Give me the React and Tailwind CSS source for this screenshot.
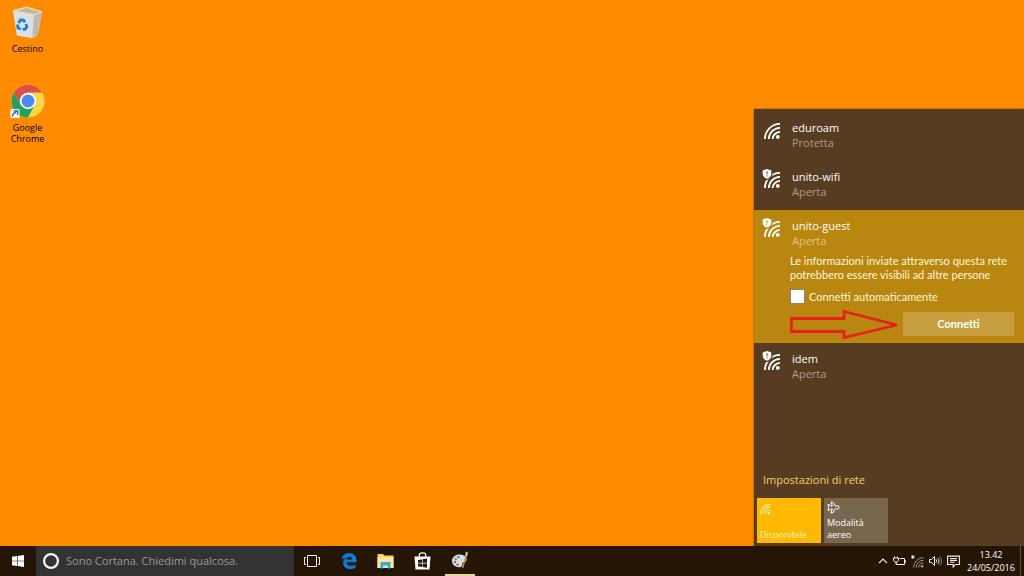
import React from 'react';

const networks = [
  { name: 'eduroam', status: 'Protetta', open: false },
  { name: 'unito-wifi', status: 'Aperta', open: true },
  { name: 'unito-guest', status: 'Aperta', open: true, selected: true },
  { name: 'idem', status: 'Aperta', open: true },
];

const SignalArcs = ({ strokeWidth = 1.8 }) => (
  <g fill="none" stroke="currentColor" strokeWidth={strokeWidth}>
    <path d="M0.9 16A15.2 15.2 0 0 1 16 0.9" />
    <path d="M4.8 16A11.4 11.4 0 0 1 16 4.9" />
    <path d="M8.6 16A7.6 7.6 0 0 1 16 8.9" />
    <circle cx="13.8" cy="13.9" r="1.9" fill="currentColor" stroke="none" />
  </g>
);

const NetworkIcon = ({ open, selected }) => {
  const back = selected ? '#b9870f' : '#563d22';
  return (
    <svg width="20" height="22" viewBox="0 0 20 22" className="shrink-0 text-white">
      <g transform="translate(2 3)">
        <SignalArcs />
      </g>
      {open && (
        <>
          <path d="M5 0L10.5 1V5C10.5 8 8 10 5 11.2C2 10 0 8 0 5V1Z" fill={back} />
          <path d="M5 0L9.3 1.5V4.8C9.3 7.2 7.5 8.8 5 9.8C2.5 8.8 0.7 7.2 0.7 4.8V1.5Z" fill="#fff" />
          <path d="M5 2.2V5.4M5 6.4V7.5" stroke={back} strokeWidth="1" />
        </>
      )}
    </svg>
  );
};

const RecycleBinIcon = () => (
  <svg width="36" height="34" viewBox="0 0 36 34">
    <path d="M3 4.5L17 1L32 6L28 28L24 32L7 29.5Z" fill="#cfc9bd" />
    <path d="M3 4.5L24 9L22.5 32L7 29.5Z" fill="#dde0e0" />
    <path d="M24 9L32 6L28.5 27L22.5 32Z" fill="#c2bab0" />
    <path d="M5.5 4.7L17 2.2L29.5 6L24 7.8Z" fill="#c9b694" />
    <path d="M3 4.5L17 1L32 6L24 9Z" fill="none" stroke="#ece2cc" strokeWidth="1" />
    <g fill="none" stroke="#1683d8" strokeWidth="2.8">
      <path d="M8.6 17L10.5 14H13.3L15 16.2" />
      <path d="M16 18L16.8 21L15 23.4H12.6" />
      <path d="M10.8 23L8 22L7.4 18.4" />
    </g>
  </svg>
);

const ChromeIcon = () => (
  <svg width="36" height="36" viewBox="0 0 36 36">
    <circle cx="18" cy="18" r="16.4" fill="#fdd54a" />
    <path d="M3.8 9.8A16.4 16.4 0 0 1 32.2 9.8H18L11 22Z" fill="#dc5145" />
    <path d="M3.8 9.8A16.4 16.4 0 0 0 18 34.4L25 22L11 22Z" fill="#1fa15f" />
    <path d="M18 9.8H32.2A16.4 16.4 0 0 1 18 34.4L25 22Z" fill="#fdd54a" />
    <circle cx="18" cy="18" r="8.2" fill="#fff" />
    <circle cx="18" cy="18" r="6.5" fill="#4a8af4" />
    <rect x="0.5" y="26" width="9" height="9" fill="#f5f8fb" />
    <path d="M2.5 33.5C2.5 30.8 4 29.6 6 29.6M3.8 28H7.6V31.8" fill="none" stroke="#1b5fa8" strokeWidth="1.4" />
  </svg>
);

const DesktopIcon = ({ label, children }) => (
  <button className="flex w-[55px] flex-col items-center gap-[3px] text-center text-[9px] leading-[11px] text-black">
    {children}
    <span className="w-11">{label}</span>
  </button>
);

const NetworkRow = ({ network }) => (
  <li className={network.selected ? 'bg-[#b9870f]' : ''}>
    <div className="flex gap-2 pt-2 pb-[11px] pl-2">
      <NetworkIcon open={network.open} selected={network.selected} />
      <div className="pl-0.5 text-[11px] leading-[15px]">
        <p className="text-white">{network.name}</p>
        <p className={network.selected ? 'text-[#ddc48a]' : 'text-[#a99c8e]'}>{network.status}</p>
      </div>
    </div>
    {network.selected && (
      <div className="-mt-[5px] pr-2.5 pb-[7px] pl-9 font-['Lato','Open_Sans',sans-serif] text-[11px] leading-[14px] text-[#fff6dc]">
        <p className="max-w-[220px]">
          Le informazioni inviate attraverso questa rete potrebbero essere visibili ad altre persone
        </p>
        <label className="mt-[7px] flex items-center gap-1">
          <input
            type="checkbox"
            className="h-[15px] w-[15px] appearance-none border border-[#8a8478] bg-white"
          />
          Connetti automaticamente
        </label>
        <div className="mt-2 flex items-center gap-[3px]">
          <svg width="110" height="30" viewBox="0 0 110 30" className="-my-1 shrink-0">
            <path
              d="M1.4 9.5H54V2.5L107 16L54 28.5V22.5H1.4Z"
              fill="none"
              stroke="#e8201c"
              strokeWidth="2.8"
            />
          </svg>
          <button className="h-6 flex-1 bg-[#c89f3f] font-bold text-white">Connetti</button>
        </div>
      </div>
    )}
  </li>
);

const NetworkPanel = () => (
  <section className="flex min-h-[437px] w-[270px] flex-col bg-[#563d22] pt-[3px] shadow-[0_0_2px_#00000080]">
    <ul>
      {networks.map((network) => (
        <NetworkRow key={network.name} network={network} />
      ))}
    </ul>
    <div className="mt-auto px-[3px] pb-[3px]">
      <a href="#impostazioni" className="ml-1.5 text-[11px] leading-4 text-[#f8cf63]">
        Impostazioni di rete
      </a>
      <div className="mt-2 flex gap-[3px] text-left text-[9px] leading-3">
        <button className="flex h-[45px] w-16 flex-col items-start justify-between bg-[#ffb900] px-[3px] pt-1.5 pb-0.5 text-left text-[#fff0bd]">
          <svg width="11" height="11" viewBox="0 0 17 17">
            <SignalArcs />
          </svg>
          Disponibile
        </button>
        <button className="flex h-[45px] w-16 flex-col items-start justify-between bg-[#78664e] px-[3px] pt-[3px] pb-0.5 text-left text-white">
          <svg width="13" height="13" viewBox="0 0 13 13" fill="none" stroke="currentColor" strokeWidth="1">
            <path d="M1 3.5H2.3L3.5 5H5.3L4 1H5.7L8.2 5H11C12.7 5.3 12.7 7.7 11 8H8.2L5.7 12H4L5.3 8H3.5L2.3 9.5H1L1.8 6.5Z" />
          </svg>
          <span>
            Modalità
            <br />
            aereo
          </span>
        </button>
      </div>
    </div>
  </section>
);

const WindowsLogo = () => (
  <svg width="12" height="12" viewBox="0 0 12 12" fill="#fff">
    <path d="M0 1.7L5 1V5.7H0ZM5.6 0.9L12 0V5.7H5.6ZM0 6.3H5V11L0 10.3ZM5.6 6.3H12V12L5.6 11.1Z" />
  </svg>
);

const TaskViewIcon = () => (
  <svg width="16" height="12" viewBox="0 0 16 12" fill="none" stroke="#f2eee9" strokeWidth="1">
    <path d="M3.5 0.5H12.5V11.5H3.5ZM2 2.5H0.5V9.5H2M14 2.5H15.5V9.5H14" />
  </svg>
);

const EdgeIcon = () => (
  <svg width="16" height="16" viewBox="0 0 16 16" fill="#0b7bdc">
    <path d="M0.4 7.2C1 2.8 4 0 8.3 0C13 0 15.6 3.2 15.6 7.6V9.2H5.4C5.5 11.6 7.2 12.8 9.8 12.8C11.7 12.8 13.2 12.3 14.5 11.5V14.8C13 15.6 11.3 16 9.2 16C5 16 2.1 13.7 2.1 9.9C2.1 7.5 3.3 5.7 5.4 4.7C3.2 4.9 1.4 5.8 0.4 7.2ZM5.5 6.5H11C11 4.8 10.2 3.8 8.5 3.8C6.8 3.8 5.8 4.9 5.5 6.5Z" />
  </svg>
);

const ExplorerIcon = () => (
  <svg width="17" height="15" viewBox="0 0 17 15">
    <path d="M0.5 0H6L7.5 1.5H16.5V14H0.5Z" fill="#f3cf6c" />
    <path d="M0.5 3H16.5V14H0.5Z" fill="#ffe79a" />
    <path d="M3.5 8H13.5V14.5H10.8V11.5H6.2V14.5H3.5Z" fill="#2fb1dc" />
  </svg>
);

const StoreIcon = () => (
  <svg width="17" height="18" viewBox="0 0 17 18">
    <path d="M5.3 5V2.8C5.3 0.3 11.7 0.3 11.7 2.8V5" fill="none" stroke="#fff" strokeWidth="1.2" />
    <path d="M0.5 4.5H16.5L15.5 17.5H1.5Z" fill="#fff" />
    <path d="M4 8L8 7.4V10.8H4ZM8.6 7.3L13 6.6V10.8H8.6ZM4 11.4H8V14.9L4 14.3ZM8.6 11.4H13V15.7L8.6 15Z" fill="#241504" />
  </svg>
);

const PaintIcon = () => (
  <svg width="18" height="18" viewBox="0 0 18 18">
    <path d="M1 10C1 5.8 5 3.2 9 3.5C13 3.8 16 6 15.5 9C15 11.2 12.5 10.5 11.5 12C10.7 13.3 12 15 9.5 16C6 17 1 14.5 1 10Z" fill="#d8dde0" />
    <circle cx="3.9" cy="11" r="1.2" fill="#d94b3a" />
    <circle cx="4.6" cy="8" r="1.2" fill="#5ea845" />
    <circle cx="7.4" cy="6" r="1.2" fill="#3f86c9" />
    <circle cx="6.6" cy="13.6" r="1.2" fill="#8a55b8" />
    <path d="M15.5 4L11.5 17" stroke="#d98a34" strokeWidth="1.5" />
    <path d="M14 4.5L15 0.5L17 1.5L16 5.5Z" fill="#d5c5a5" />
  </svg>
);

const apps = [
  { label: 'Visualizzazione attività', Icon: TaskViewIcon },
  { label: 'Microsoft Edge', Icon: EdgeIcon },
  { label: 'Esplora file', Icon: ExplorerIcon },
  { label: 'Store', Icon: StoreIcon },
  { label: 'Paint', Icon: PaintIcon, active: true },
];

const Tray = () => (
  <div className="ml-auto flex items-center gap-[5px] text-[#f2eee9]">
    <button aria-label="Mostra icone nascoste">
      <svg width="10" height="12" viewBox="0 0 10 12" fill="none" stroke="currentColor" strokeWidth="1.2">
        <path d="M1 8.2L5 4.2L9 8.2" />
      </svg>
    </button>
    <button aria-label="Batteria">
      <svg width="13" height="12" viewBox="0 0 13 12" fill="none" stroke="currentColor" strokeWidth="1">
        <path d="M6.5 3.5H11.5V9.5H3.5V8M11.5 5.5H12.5V7.5" />
        <path d="M1.5 1.5V3M4.5 1.5V3M0.5 3H5.5V5C5.5 7.5 0.5 7.5 0.5 5ZM3 7V9.5" />
      </svg>
    </button>
    <button aria-label="Rete">
      <svg width="13" height="13" viewBox="0 0 13 13">
        <g transform="translate(2 2) scale(0.66)" opacity="0.65">
          <SignalArcs strokeWidth={1.4} />
        </g>
        <path d="M1.8 0V4M0 2H3.6M0.5 0.7L3.1 3.3M0.5 3.3L3.1 0.7" stroke="currentColor" strokeWidth="0.9" />
      </svg>
    </button>
    <button aria-label="Volume">
      <svg width="13" height="12" viewBox="0 0 13 12" fill="none" stroke="currentColor" strokeWidth="1">
        <path d="M0.5 4.5H2.5L5.5 1.5V10.5L2.5 7.5H0.5Z" />
        <path d="M7 4.3C7.8 5.3 7.8 6.7 7 7.7M8.8 2.9C10.4 4.7 10.4 7.3 8.8 9.1" />
        <path d="M10.6 1.5C13 4 13 8 10.6 10.5" opacity="0.5" />
      </svg>
    </button>
    <button aria-label="Centro notifiche">
      <svg width="13" height="13" viewBox="0 0 13 13" fill="none" stroke="currentColor" strokeWidth="1.1">
        <path d="M0.6 1.1H12.4V9.5H8.5L6.2 12V9.5H0.6ZM3 3.6H10M3 5.5H10M3 7.3H7.5" />
      </svg>
    </button>
    <time dateTime="2016-05-24T13:42" className="ml-0.5 w-12 text-center text-[9px] leading-[13px] text-white">
      13.42
      <br />
      24/05/2016
    </time>
    <button aria-label="Mostra desktop" className="h-full w-1 border-l border-[#5c5044]" />
  </div>
);

const Taskbar = () => (
  <footer className="flex h-[30px] bg-[#241504]">
    <button aria-label="Start" className="flex w-9 items-center justify-center">
      <WindowsLogo />
    </button>
    <label className="-mr-px flex w-[258px] items-center gap-1.5 bg-[#333333] pl-1.5">
      <svg width="18" height="18" viewBox="0 0 18 18" fill="none" stroke="#f5f5f5" strokeWidth="2.2">
        <circle cx="9" cy="9" r="6.9" />
      </svg>
      <input
        type="text"
        aria-label="Cerca"
        placeholder="Sono Cortana. Chiedimi qualcosa."
        className="min-w-0 flex-1 bg-transparent text-[11px] text-white outline-none placeholder:text-[#989898]"
      />
    </label>
    {apps.map(({ label, Icon, active }) => (
      <button key={label} aria-label={label} className="flex w-[37px] justify-center">
        <span
          className={
            active
              ? 'flex h-full w-[30px] items-center justify-center border-b-2 border-[#f5d58c]'
              : 'flex h-full items-center'
          }
        >
          <Icon />
        </span>
      </button>
    ))}
    <Tray />
  </footer>
);

const App = () => (
  <div className="flex min-h-screen flex-col bg-[#ff8c00] font-['Open_Sans','Noto_Sans',sans-serif]">
    <main className="flex flex-1 items-end justify-between">
      <div className="flex flex-col gap-[29px] self-start pt-1.5">
        <DesktopIcon label="Cestino">
          <RecycleBinIcon />
        </DesktopIcon>
        <DesktopIcon label="Google Chrome">
          <ChromeIcon />
        </DesktopIcon>
      </div>
      <NetworkPanel />
    </main>
    <Taskbar />
  </div>
);

export default App;
